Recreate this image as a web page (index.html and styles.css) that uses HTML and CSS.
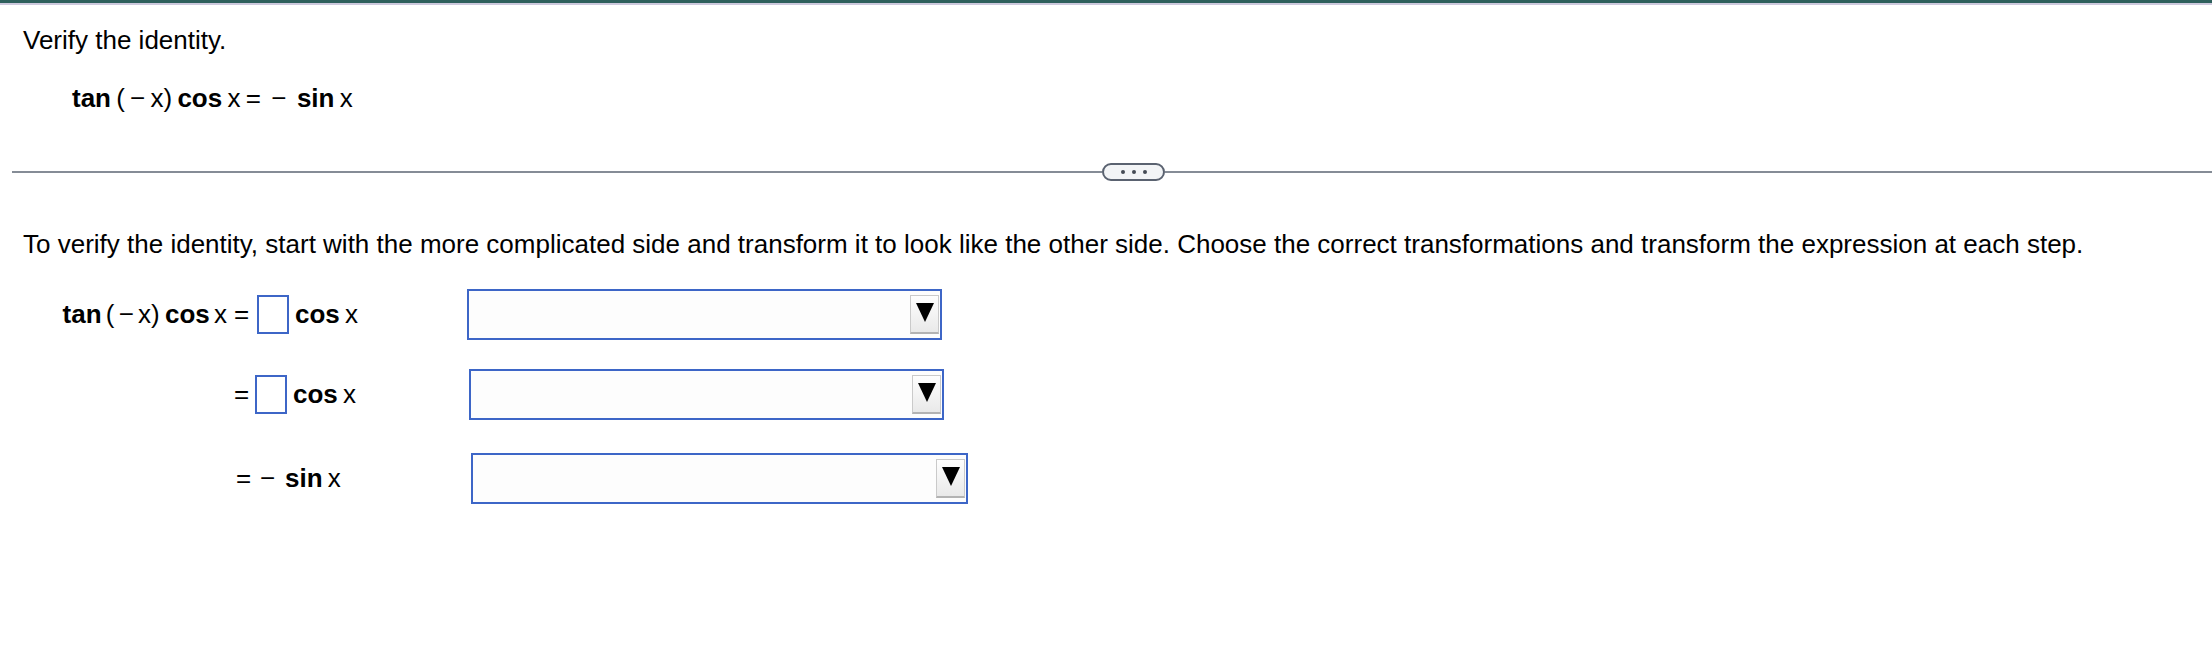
FILE: index.html
```html
<!DOCTYPE html>
<html>
<head>
<meta charset="utf-8">
<link rel="stylesheet" href="styles.css">
</head>
<body>
<div class="topbar"></div>
<div class="page">
  <p class="prompt">Verify the identity.</p>
  <p class="identity"><span class="fn">tan</span> ( − x)&#8201;<span class="fn">cos</span> x = &#8201;− &#8201;<span class="fn">sin</span> x</p>

  <div class="divider">
    <div class="rule rule-left"></div>
    <div class="pill"><span class="dot"></span><span class="dot"></span><span class="dot"></span></div>
    <div class="rule rule-right"></div>
  </div>

  <p class="instructions">To verify the identity, start with the more complicated side and transform it to look like the other side. Choose the correct transformations and transform the expression at each step.</p>

  <div class="steps">
    <div class="step step-1">
      <div class="lhs"><span class="fn">tan</span> ( − x)&#8201;<span class="fn">cos</span> x</div>
      <div class="rhs"><span class="eq">=</span><span class="box"></span><span class="fn">cos</span>&#8201;x</div>
      <div class="select"><span class="btn"><span class="tri"></span></span></div>
    </div>
    <div class="step step-2">
      <div class="lhs"></div>
      <div class="rhs"><span class="eq">=</span><span class="box"></span><span class="fn">cos</span>&#8201;x</div>
      <div class="select"><span class="btn"><span class="tri"></span></span></div>
    </div>
    <div class="step step-3">
      <div class="lhs"></div>
      <div class="rhs"><span class="eq">=</span><span class="minus">−</span><span class="fn">sin</span>&#8201;x</div>
      <div class="select"><span class="btn"><span class="tri"></span></span></div>
    </div>
  </div>
</div>
</body>
</html>
```
FILE: styles.css
```css
html, body {
  margin: 0;
  padding: 0;
  background: #ffffff;
}
body {
  font-family: "Liberation Sans", Arial, sans-serif;
  font-size: 26px;
  line-height: 31px;
  color: #000;
  width: 2212px;
  overflow: hidden;
}
.topbar {
  height: 3px;
  background: #2e605c;
  border-bottom: 2px solid #cdc9dd;
}
p {
  margin: 0;
}
.prompt {
  margin-top: 20px;
  padding-left: 23px;
}
.identity {
  margin-top: 27px;
  padding-left: 72px;
  word-spacing: -2px;
}
.fn {
  font-weight: bold;
}
.divider {
  display: flex;
  align-items: center;
  margin-top: 49px;
  height: 18px;
}
.rule {
  height: 2px;
  background: #858c96;
}
.rule-left {
  margin-left: 12px;
  width: 1090px;
}
.rule-right {
  flex: 1;
}
.pill {
  box-sizing: border-box;
  width: 63px;
  height: 18px;
  border: 2px solid #5a6270;
  border-radius: 9px;
  background: #f2f4f6;
  display: flex;
  align-items: center;
  justify-content: center;
  gap: 7px;
}
.dot {
  width: 4px;
  height: 4px;
  border-radius: 50%;
  background: #454b55;
}
.instructions {
  margin-top: 48px;
  padding-left: 23px;
}
.steps {
  margin-top: 29px;
  display: flex;
  flex-direction: column;
}
.step {
  display: grid;
  grid-template-columns: 234px 233px auto;
  align-items: center;
  height: 51px;
}
.step-2 {
  margin-top: 29px;
}
.step-3 {
  margin-top: 33px;
}
.lhs {
  text-align: right;
  padding-right: 7px;
  word-spacing: -3px;
}
.rhs {
  display: flex;
  align-items: center;
  white-space: pre;
}
.eq {
  width: 21px;
}
.step-3 .eq {
  margin-left: 2px;
  width: 24px;
}
.minus {
  width: 25px;
}
.box {
  box-sizing: border-box;
  width: 32px;
  height: 39px;
  border: 2px solid #3d66c7;
  background: #fff;
  margin-right: 6px;
}
.step-1 .box {
  margin-left: 2px;
}
.select {
  box-sizing: border-box;
  width: 475px;
  height: 51px;
  border: 2px solid #3d66c7;
  background: #fdfdfd;
  display: flex;
  align-items: center;
  justify-content: flex-end;
  padding-right: 1px;
}
.step-2 .select {
  margin-left: 2px;
}
.step-3 .select {
  margin-left: 4px;
  width: 497px;
}
.btn {
  box-sizing: border-box;
  width: 29px;
  height: 39px;
  border: 1px solid #cacaca;
  border-bottom: 2px solid #b3b3b3;
  background: linear-gradient(#fefefe, #e9e9e9);
  display: flex;
  justify-content: center;
  padding-top: 7px;
}
.tri {
  width: 0;
  height: 0;
  border-left: 9px solid transparent;
  border-right: 9px solid transparent;
  border-top: 19px solid #000;
}
```
